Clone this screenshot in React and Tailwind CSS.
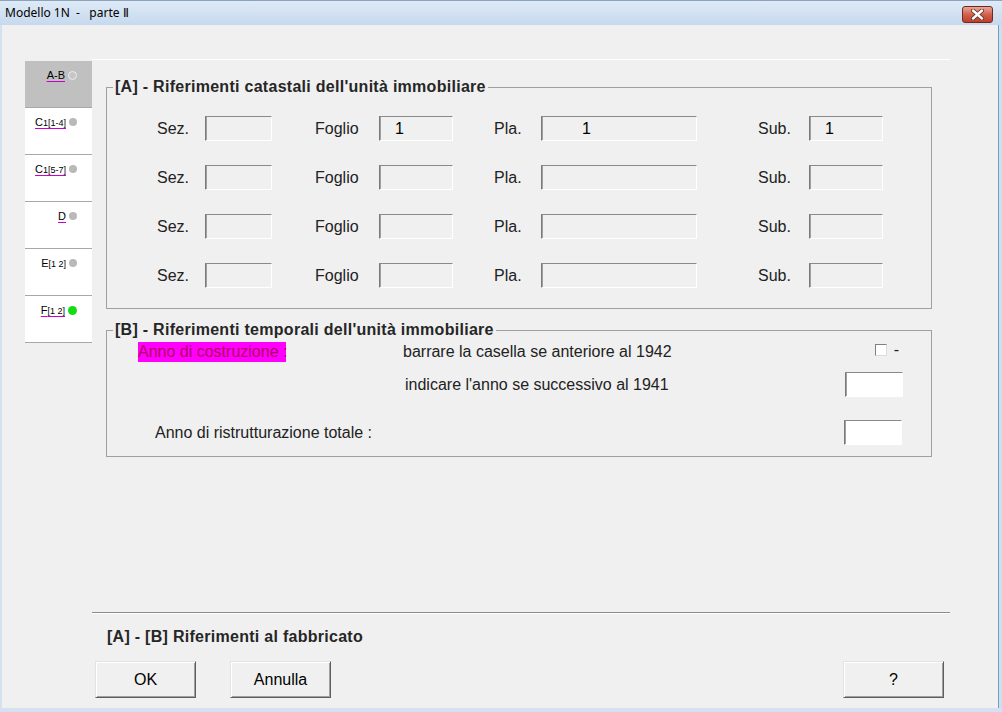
import React from 'react'

const font = { fontFamily: '"Liberation Sans", Arial, sans-serif' }

const tabs = [
  { key: 'ab', label: <>A-B</>, dot: 'hollow', active: true, underline: true },
  { key: 'c14', label: <>C<span className="text-[9px]">1[1-4]</span></>, dot: 'gray', underline: true },
  { key: 'c57', label: <>C<span className="text-[9px]">1[5-7]</span></>, dot: 'gray', underline: true },
  { key: 'd', label: <>D</>, dot: 'gray', underline: true },
  { key: 'e', label: <>E<span className="text-[9px]">[1 2]</span></>, dot: 'gray', underline: false },
  { key: 'f', label: <>F<span className="text-[9px]">[1 2]</span></>, dot: 'green', underline: true },
]

function Dot({ kind }) {
  if (kind === 'hollow')
    return <span className="w-[9px] h-[9px] rounded-full border border-[#ececec] bg-[#c6c6c6]" />
  if (kind === 'green')
    return <span className="w-[9px] h-[9px] rounded-full bg-[#12dd12]" />
  return <span className="w-[8px] h-[8px] rounded-full bg-[#b9b9b9]" />
}

function Tab({ tab }) {
  return (
    <div
      className={`h-[47px] flex justify-end items-start pr-[15px] pt-[8px] gap-[3px] border-b border-[#a8a8a8] ${
        tab.active ? 'bg-[#c0c0c0]' : 'bg-white'
      }`}
    >
      <span
        className={`text-[11px] leading-[13px] text-black ${
          tab.underline ? 'underline decoration-[#cc00cc] underline-offset-2' : ''
        }`}
      >
        {tab.label}
      </span>
      <span className="h-[12px] flex items-center">
        <Dot kind={tab.dot} />
      </span>
    </div>
  )
}

function Field({ w, value, pl = 'pl-[15px]', white }) {
  return (
    <div
      className={`h-[25px] ${w} ${pl} flex items-center border border-t-[#8a8a8a] border-l-[#7a7a7a] border-r-white border-b-white shadow-[inset_1px_0_0_#a0a0a0] ${
        white ? 'bg-white' : 'bg-[#f0f0f0]'
      } text-[16px] text-black`}
    >
      {value}
    </div>
  )
}

function Label({ w, ml = '', children }) {
  return <span className={`${w} ${ml} text-[16px] text-[#222]`}>{children}</span>
}

function CatRow({ first }) {
  return (
    <div className="flex items-center h-[25px]">
      <Label w="w-[48px]">Sez.</Label>
      <Field w="w-[67px]" />
      <Label w="w-[64px]" ml="ml-[43px]">Foglio</Label>
      <Field w="w-[74px]" value={first ? '1' : ''} />
      <Label w="w-[47px]" ml="ml-[41px]">Pla.</Label>
      <Field w="w-[156px]" pl="pl-[40px]" value={first ? '1' : ''} />
      <Label w="w-[51px]" ml="ml-[61px]">Sub.</Label>
      <Field w="w-[74px]" value={first ? '1' : ''} />
    </div>
  )
}

function Button({ children, ml = '' }) {
  return (
    <button
      className={`w-[101px] h-[37px] ${ml} bg-[#f0f0f0] border border-t-[#e3e3e3] border-l-[#e3e3e3] border-r-[#5e5e5e] border-b-[#5e5e5e] shadow-[inset_1px_1px_0_#ffffff,inset_-1px_-1px_0_#a0a0a0] text-[16px] text-black`}
    >
      {children}
    </button>
  )
}

export default function App() {
  return (
    <div className="w-[1002px] h-[712px] flex flex-col bg-[#f0f0f0] overflow-hidden" style={font}>
      {/* title bar */}
      <div className="h-[25px] flex items-center justify-between pl-[5px] pr-[9px] bg-gradient-to-b from-[#dfeaf6] to-[#c6d9ee] border-t border-[#8aa2bd]">
        <span className="text-[12px] text-black whitespace-pre" style={{ fontFamily: '"Noto Sans", "Open Sans", sans-serif' }}>
          {'Modello 1N  -   parte Ⅱ'}
        </span>
        <div className="w-[31px] h-[17px] mt-[2px] rounded-[3px] border border-[#6e2a20] bg-gradient-to-b from-[#e9a598] via-[#d0614d] to-[#c03d28] flex items-center justify-center">
          <svg width="13" height="11" viewBox="0 0 13 11">
            <path d="M2 1.5 L11 9.5 M11 1.5 L2 9.5" stroke="#5a2a22" strokeWidth="4" strokeLinecap="round" />
            <path d="M2 1.5 L11 9.5 M11 1.5 L2 9.5" stroke="#ffffff" strokeWidth="2.4" strokeLinecap="round" />
          </svg>
        </div>
      </div>

      <div className="flex-1 flex">
        <div className="w-[2px] bg-[#d3e1f0]" />
        <div className="flex-1 flex flex-col">
          {/* top separator */}
          <div className="mt-[34px] ml-[90px] w-[858px] h-px bg-white" />

          <div className="mt-[1px] flex pl-[23px]">
            <div className="w-[67px] flex flex-col">
              {tabs.map((t) => (
                <Tab key={t.key} tab={t} />
              ))}
            </div>

            <div className="ml-[14px] w-[826px] flex flex-col">
              <fieldset className="mt-[17px] border border-[#a0a0a0] pt-[20px] pb-[20px]">
                <legend className="ml-[6px] px-[2px] text-[16px] leading-[18px] font-bold tracking-[0.28px] text-[#262626]">
                  [A] - Riferimenti catastali dell'unità immobiliare
                </legend>
                <div className="pl-[50px] flex flex-col gap-[24px]">
                  <CatRow first />
                  <CatRow />
                  <CatRow />
                  <CatRow />
                </div>
              </fieldset>

              <fieldset className="mt-[12px] border border-[#a0a0a0] pb-[11px]">
                <legend className="ml-[6px] px-[2px] text-[16px] leading-[18px] font-bold tracking-[0.28px] text-[#262626]">
                  [B] - Riferimenti temporali dell'unità immobiliare
                </legend>
                <div className="mt-[3px] h-[20px] flex items-center pl-[31px] pr-[32px]">
                  <span className="w-[148px] shrink-0 h-[20px] bg-[#ff00ff] text-[#b0005a] text-[16px] leading-[20px] whitespace-nowrap">
                    Anno di costruzione :
                  </span>
                  <span className="ml-[117px] text-[16px] text-[#222] whitespace-nowrap">barrare la casella se anteriore al 1942</span>
                  <span className="ml-auto w-[12px] h-[12px] mb-[4px] bg-white border border-t-[#808080] border-l-[#808080] border-r-[#dcdcdc] border-b-[#dcdcdc]" />
                  <span className="ml-[7px] mb-[4px] text-[16px] leading-[16px] text-[#222]">-</span>
                </div>
                <div className="mt-[10px] h-[25px] flex items-center pl-[298px] pr-[28px]">
                  <span className="text-[16px] text-[#222]">indicare l'anno se successivo al 1941</span>
                  <div className="ml-auto">
                    <Field w="w-[58px]" white />
                  </div>
                </div>
                <div className="mt-[23px] h-[25px] flex items-center pl-[48px] pr-[29px]">
                  <span className="text-[16px] text-[#222]">Anno di ristrutturazione totale :</span>
                  <div className="ml-auto">
                    <Field w="w-[58px]" white />
                  </div>
                </div>
              </fieldset>
            </div>
          </div>

          <div className="flex-1" />

          {/* footer */}
          <div className="ml-[90px] w-[858px] h-px bg-[#8c8c8c]" />
          <div className="ml-[90px] w-[858px] h-px bg-white" />
          <div className="mt-[14px] pl-[105px] text-[16px] leading-[18px] font-bold tracking-[0.28px] text-[#262626]">
            [A] - [B] Riferimenti al fabbricato
          </div>
          <div className="mt-[15px] mb-[10px] flex pl-[93px]">
            <Button>OK</Button>
            <Button ml="ml-[34px]">Annulla</Button>
            <Button ml="ml-[512px]">?</Button>
          </div>
        </div>
        <div className="w-[4px] flex">
          <div className="w-px bg-[#6b9fc4]" />
          <div className="flex-1 bg-[#cfdfee]" />
        </div>
      </div>
      <div className="h-[4px] bg-[#d3e1f0]" />
    </div>
  )
}
